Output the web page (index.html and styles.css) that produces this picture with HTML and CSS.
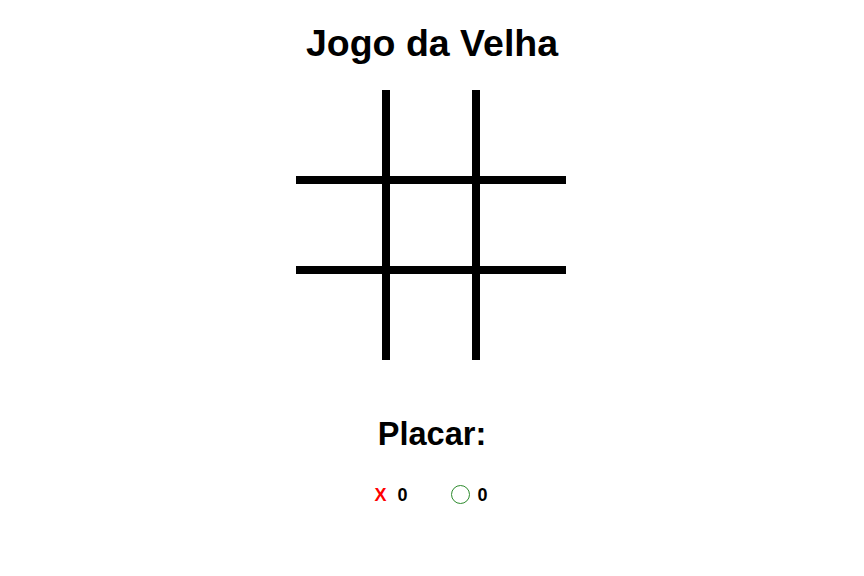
FILE: index.html
```html
<!DOCTYPE html>
<html>
<head lang="pt-BR">
    <meta charset="UTF-8">
    <title>Jogo da Velha</title>
    <link rel="stylesheet" href="styles.css">
</head>
<body>
<div id="container">
    <h1 class="title">Jogo da Velha</h1>
    <div id="board">
        <div class="cell"></div>
        <div class="cell"></div>
        <div class="cell"></div>
        <div class="cell"></div>
        <div class="cell"></div>
        <div class="cell"></div>
        <div class="cell"></div>
        <div class="cell"></div>
        <div class="cell"></div>
    </div>
    <h2 class="placar-title">Placar:</h2>
    <div id="placar">
        <div class="player">
            <span class="mark-x">X</span>
            <span class="points" id="pontos-x">0</span>
        </div>
        <div class="player">
            <span class="mark-o"></span>
            <span class="points" id="pontos-o">0</span>
        </div>
    </div>
</div>
</body>
</html>
```

FILE: styles.css
```css
* {
    margin: 0;
    padding: 0;
    box-sizing: border-box;
}

body {
    font-family: "Liberation Sans", Arial, sans-serif;
    color: #000;
    background: #fff;
}

#container {
    display: flex;
    flex-direction: column;
    align-items: center;
    padding-top: 22px;
}

.title {
    font-size: 37.5px;
    line-height: 42px;
    font-weight: bold;
}

#board {
    display: grid;
    grid-template-columns: repeat(3, 90px);
    grid-template-rows: repeat(3, 90px);
    margin-top: 26px;
    margin-right: 2px;
}

.cell {
    border: 4px solid #000;
    cursor: pointer;
}

/* tira as bordas de fora do tabuleiro */
.cell:nth-child(-n+3) {
    border-top: none;
}

.cell:nth-child(n+7) {
    border-bottom: none;
}

.cell:nth-child(3n+1) {
    border-left: none;
}

.cell:nth-child(3n) {
    border-right: none;
}

.placar-title {
    font-size: 32.5px;
    line-height: 37px;
    margin-top: 56px;
}

#placar {
    display: flex;
    gap: 43px;
    margin-top: 32px;
    margin-right: 2px;
    font-size: 18px;
    line-height: 21px;
    font-weight: bold;
}

.player {
    display: flex;
    align-items: baseline;
    gap: 11px;
}

.mark-x {
    color: #f00;
}

.mark-o {
    display: inline-block;
    width: 19px;
    height: 19px;
    border: 1px solid #2e8b2e;
    border-radius: 50%;
    align-self: flex-end;
    margin-bottom: 2px;
    margin-right: -3px;
}
```
